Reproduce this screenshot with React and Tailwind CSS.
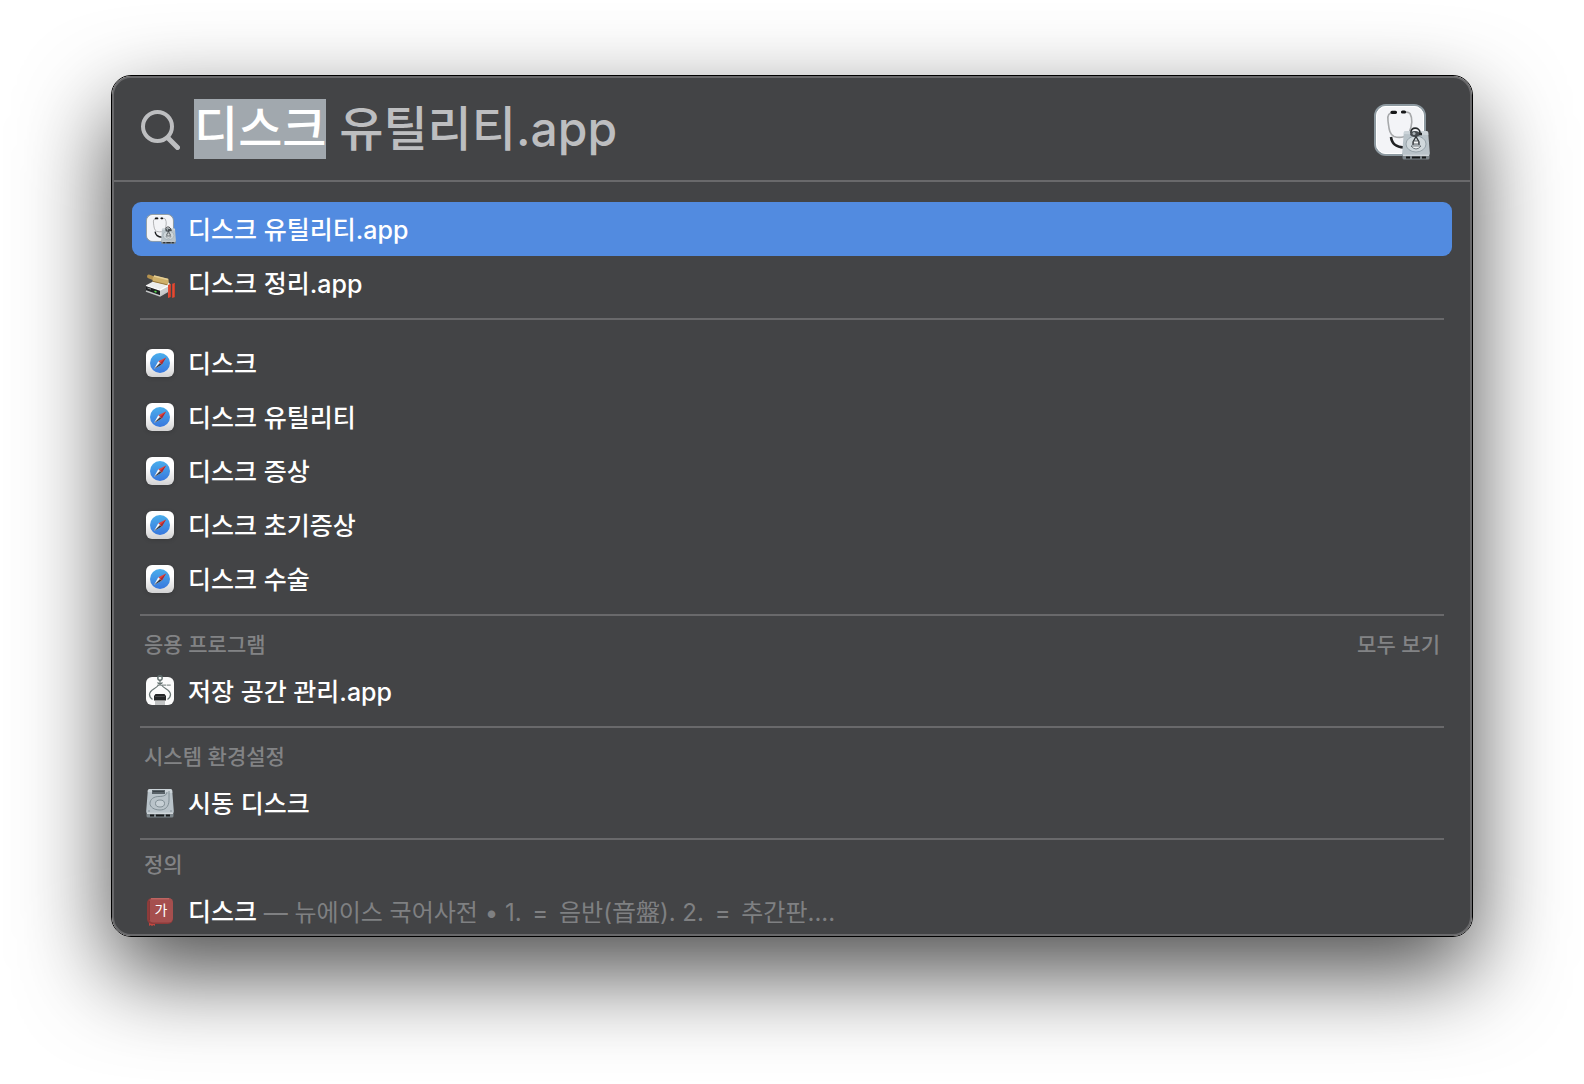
import React, { useEffect, useRef } from 'react';

const SearchIcon = () => (
  <svg viewBox="0 0 40 42" className="w-10 h-[42px] shrink-0" fill="none" stroke="#bdbec0" strokeLinecap="round">
    <circle cx="17.500" cy="18.500" r="14.500" strokeWidth="4" />
    <path d="M28 30L37.500 39.500" strokeWidth="5" />
  </svg>
);

// shared drive body, drawn in a 28x30 box
const Drive = () => (
  <g>
    <path d="M0.500 23V28Q0.500 29.500 2 29.500H26Q27.500 29.500 27.500 28V23Z" fill="#7d868b" />
    <path d="M4 26.500H8V28.500H4ZM10 26.500H18V28.500H10ZM20 26.500H24V28.500H20Z" fill="#17191a" />
    <path d="M3.500 1H24.500Q26 1 26.200 2.500L27.800 23Q28 25.300 26 25.300H2Q0 25.300 0.200 23L1.800 2.500Q2 1 3.500 1Z" fill="#b9c3c9" />
    <path d="M3.500 1H24.500Q26 1 26.200 2.500L26.400 5L1.700 4L1.800 2.500Q2 1 3.500 1Z" fill="#d3dade" opacity="0.7" />
    <path d="M1 25.300H27" stroke="#e1e7ea" strokeWidth="1" />
  </g>
);

const DriveIcon = () => (
  <svg viewBox="0 0 28 30" className="w-7 h-[30px] shrink-0">
    <Drive />
    <rect x="6" y="2" width="13" height="4" fill="#596268" />
    <path d="M7 3.500H18" stroke="#3b4348" strokeWidth="1" />
    <path d="M23 3V12C23 19 19 22 14 22C8 22 4 19 4 15.500C4 11 8 8.500 13 8.500C18 8.500 21 7 21 4" fill="none" stroke="#7b888f" strokeWidth="0.900" />
    <ellipse cx="14" cy="15.500" rx="4.500" ry="3.500" fill="#c7d0d5" stroke="#7b888f" strokeWidth="0.900" />
    <circle cx="3" cy="23" r="0.700" fill="#76828a" />
    <circle cx="25" cy="23" r="0.700" fill="#76828a" />
  </svg>
);

const DiskUtility = () => (
  <g>
    <rect x="1" y="1" width="50" height="50" rx="11" fill="#f3f4f7" stroke="#8d99a0" strokeWidth="2" />
    <rect x="2.500" y="2.500" width="47" height="47" rx="9.500" fill="none" stroke="#ffffff" strokeWidth="1" />
    <path d="M20 8.500C15 8.500 13 11 14 17C15 24 15 30 20 32.500C26 34.500 33 33 35 29C38 22 39 15 36 9.500C34.500 8 32 8 30 8.500" fill="none" stroke="#a7a9ab" strokeWidth="1.600" />
    <path d="M17 33C18 41 23 43 30 43.500" fill="none" stroke="#202224" strokeWidth="2.600" />
    <path d="M18 8.300H20M20.500 8.300H21.500M29.500 8H30.500M28.500 8H29" stroke="#161718" strokeWidth="3.200" strokeLinecap="round" />
    <g transform="translate(28 26)">
      <Drive />
      <ellipse cx="14" cy="14" rx="10" ry="8" fill="#d0d8dc" stroke="#8a979e" strokeWidth="0.800" />
      <path d="M9 16Q14 22 19 16Z" fill="#eef1f2" stroke="#555d62" strokeWidth="0.800" />
      <path d="M9 3C8 -3.500 18 -3.500 18 3" fill="none" stroke="#26292b" strokeWidth="1.600" />
      <ellipse cx="13" cy="4" rx="5" ry="3" fill="#44494d" />
      <circle cx="12" cy="3.500" r="1.500" fill="#a9b1b5" />
      <path d="M17 4H20" stroke="#26292b" strokeWidth="2.500" />
      <path d="M14 6.500L11 12V15M14 6.500L17 12V15" fill="none" stroke="#303437" strokeWidth="1.300" />
      <path d="M11.500 11H16.500V14H11.500Z" fill="#f4f6f7" stroke="#3a3f42" strokeWidth="0.800" />
    </g>
  </g>
);

const DiskUtilityIcon = () => (
  <svg viewBox="0 0 56 56" className="w-[30px] h-[30px] shrink-0">
    <DiskUtility />
  </svg>
);

const CleanupIcon = () => (
  <svg viewBox="0 0 28 28" className="w-7 h-7 shrink-0 overflow-visible">
    <path d="M0.500 16L8 12H21L25 16L15 22.500L0.500 18Z" fill="#eceded" />
    <path d="M0 16.500L14 21V27L1 22.500Q0 22 0 21Z" fill="#1f2123" />
    <path d="M14 21L24.500 15.500V20.500L14 27Z" fill="#c9cbcc" />
    <path d="M0 22L14 27L24 21" fill="none" stroke="#c3c5c6" strokeWidth="1.500" />
    <path d="M0 16.500L14 21L24.500 15.500" fill="none" stroke="#ffffff" strokeWidth="1.200" />
    <path d="M1.500 19L5 20.200" stroke="#8a8e90" strokeWidth="1" />
    <path d="M8.500 22.300L10.500 23" stroke="#53e04c" strokeWidth="1.600" />
    <path d="M3 7.500L8 9.500" stroke="#b5924e" strokeWidth="4" strokeLinecap="round" />
    <path d="M8 6.500L22.500 10Q23.500 13 21.500 16L6.500 12.500Q6 9 8 6.500Z" fill="#cfb06a" />
    <path d="M8 7L22 10.500" stroke="#e6cf94" strokeWidth="1.500" />
    <path d="M6.800 12.300L21.300 15.800" stroke="#96763a" strokeWidth="1" />
    <path d="M22 16L24.800 14.800V28L22 29Z" fill="#e34a33" />
    <path d="M26.200 14.800L29 14V28L26.200 29Z" fill="#e34a33" />
    <path d="M24.300 15V28M28.500 14.500V28" stroke="#c23b28" strokeWidth="0.800" />
  </svg>
);

const SafariIcon = () => (
  <svg viewBox="0 0 28 28" className="w-7 h-7 shrink-0 drop-shadow-sm">
    <defs>
      <linearGradient id="safari-tile" x1="0" y1="0" x2="0" y2="1">
        <stop offset="0.4" stopColor="#ffffff" />
        <stop offset="1" stopColor="#d2d2d3" />
      </linearGradient>
      <linearGradient id="safari-dial" x1="0" y1="0" x2="0" y2="1">
        <stop offset="0" stopColor="#4aaeec" />
        <stop offset="1" stopColor="#3877dd" />
      </linearGradient>
    </defs>
    <rect width="28" height="28" rx="6" fill="url(#safari-tile)" />
    <circle cx="14" cy="14" r="10" fill="url(#safari-dial)" />
    <path d="M20 8.500L15.700 15.700L12.300 12.300Z" fill="#e8453c" />
    <path d="M20 8.500L15.700 15.700L14 14Z" fill="#a72d34" />
    <path d="M8 20L12.300 12.300L15.700 15.700Z" fill="#f5f6f7" />
    <path d="M8 20L14 14L15.700 15.700Z" fill="#353a43" />
  </svg>
);

const StorageIcon = () => (
  <svg viewBox="0 0 28 28" className="w-7 h-7 shrink-0 overflow-visible">
    <rect width="28" height="28" rx="6" fill="#fbfbfb" />
    <circle cx="14" cy="1" r="2.200" fill="none" stroke="#5f6d6c" strokeWidth="1.400" />
    <path d="M14 3V8M11.500 5.500L14 7.500L16.500 5.500" fill="none" stroke="#5f6d6c" strokeWidth="1.200" />
    <path d="M11.500 8.200H25" stroke="#8b9392" strokeWidth="1.200" strokeDasharray="4 0.600" />
    <path d="M12.500 8C10 12 3.500 12.500 3.500 17.500Q3.500 20.500 6.500 22.500M15.500 8C18 12 24.500 12.500 24.500 17.500Q24.500 20.500 21.500 22.500" fill="none" stroke="#6b7776" strokeWidth="1.300" />
    <path d="M9.500 17H18.500L20 19V23.500H8V19Z" fill="#242627" />
    <path d="M9.500 19.500H18.500" stroke="#878b8c" strokeWidth="0.700" strokeDasharray="1 1" />
    <path d="M9 25H19M9 27H19" stroke="#85898a" strokeWidth="1" />
  </svg>
);

const DictionaryIcon = () => (
  <svg viewBox="0 0 28 28" className="w-7 h-7 shrink-0 overflow-visible">
    <path d="M3 23H9V29L7.500 28L6 29L4.500 28L3 29Z" fill="#c24740" />
    <rect x="1" y="1" width="26" height="26" rx="5" fill="#8e3b3a" />
    <rect x="3" y="1" width="24" height="24.500" rx="4.500" fill="#a54f4e" />
    <path d="M5 1.800H23" stroke="#c96f6b" strokeWidth="1" />
    <path d="M3.500 4V23" stroke="#7e3231" strokeWidth="0.800" />
    <text x="15" y="18" textAnchor="middle" fontSize="14" fontWeight="400" fill="#ffffff">가</text>
  </svg>
);

const Divider = ({ className = 'mt-2' }) => <hr className={`mx-2 border-0 h-0.5 bg-[#69696b] ${className}`} />;

const Row = ({ icon, label, detail, selected, last }) => (
  <li>
    <button
      type="button"
      className={`flex items-center w-full px-3.5 gap-3.5 text-left whitespace-nowrap text-[25px] leading-8 rounded-[9px] ${selected ? 'bg-[#528be0]' : ''} ${last ? 'h-[50px] pt-1' : 'h-[54px]'}`}
    >
      <span className="w-7 h-7 shrink-0 flex items-center">{icon}</span>
      <span className="truncate pt-0.5">
        <span className="font-medium text-white">{label}</span>
        {detail}
      </span>
    </button>
  </li>
);

const SectionTitle = ({ title, action, className = 'h-12' }) => (
  <div className={`flex items-end justify-between px-3 pb-[5px] text-[21px] leading-7 font-medium text-[#828385] ${className}`}>
    <h2>{title}</h2>
    {action && <button type="button">{action}</button>}
  </div>
);

const suggestions = ['디스크', '디스크 유틸리티', '디스크 증상', '디스크 초기증상', '디스크 수술'];

const App = () => {
  const inputRef = useRef(null);

  useEffect(() => {
    inputRef.current.focus();
    inputRef.current.setSelectionRange(0, 3);
  }, []);

  return (
    <div className="min-h-screen bg-white px-[111px] py-[75px] overflow-hidden font-['Inter','Noto_Sans_CJK_KR',sans-serif]">
      <main className="rounded-[20px] border border-black shadow-[0_36px_90px_rgba(0,0,0,0.7)]">
        <div className="rounded-[19px] border-2 border-[#69696b] bg-[#434446] overflow-hidden">

          <div className="flex items-center h-[104px] pl-[26px] pr-10 gap-3.5 border-b-2 border-[#69696b]">
            <SearchIcon />
            <input
              ref={inputRef}
              type="text"
              aria-label="Spotlight 검색"
              spellCheck={false}
              defaultValue="디스크 유틸리티.app"
              className="flex-1 min-w-0 h-[60px] text-[48px] leading-[60px] font-medium bg-transparent text-[#bdbec0] outline-none selection:bg-[#a1a8ae] selection:text-white"
            />
            <svg viewBox="0 -6 56 62" className="w-14 h-[62px] shrink-0">
              <DiskUtility />
            </svg>
          </div>

          <div className="px-[18px] pt-5">
            <ul>
              <Row icon={<DiskUtilityIcon />} label="디스크 유틸리티.app" selected />
              <Row icon={<CleanupIcon />} label="디스크 정리.app" />
            </ul>
            <Divider className="mt-2 mb-4" />
            <ul>
              {suggestions.map((text) => (
                <Row key={text} icon={<SafariIcon />} label={text} />
              ))}
            </ul>
            <Divider />
            <SectionTitle title="응용 프로그램" action="모두 보기" />
            <ul>
              <Row icon={<StorageIcon />} label="저장 공간 관리.app" />
            </ul>
            <Divider />
            <SectionTitle title="시스템 환경설정" />
            <ul>
              <Row icon={<DriveIcon />} label="시동 디스크" />
            </ul>
            <Divider />
            <SectionTitle title="정의" className="h-11" />
            <ul>
              <Row
                icon={<DictionaryIcon />}
                label="디스크"
                detail={
                  <span className="text-[24px] text-[#7f8082]">
                    {' '}— 뉴에이스 국어사전 • 1. <span className="px-1">=</span> 음반(音盤). 2. <span className="px-1">=</span> 추간판....
                  </span>
                }
                last
              />
            </ul>
          </div>
        </div>
      </main>
    </div>
  );
};

export default App;
